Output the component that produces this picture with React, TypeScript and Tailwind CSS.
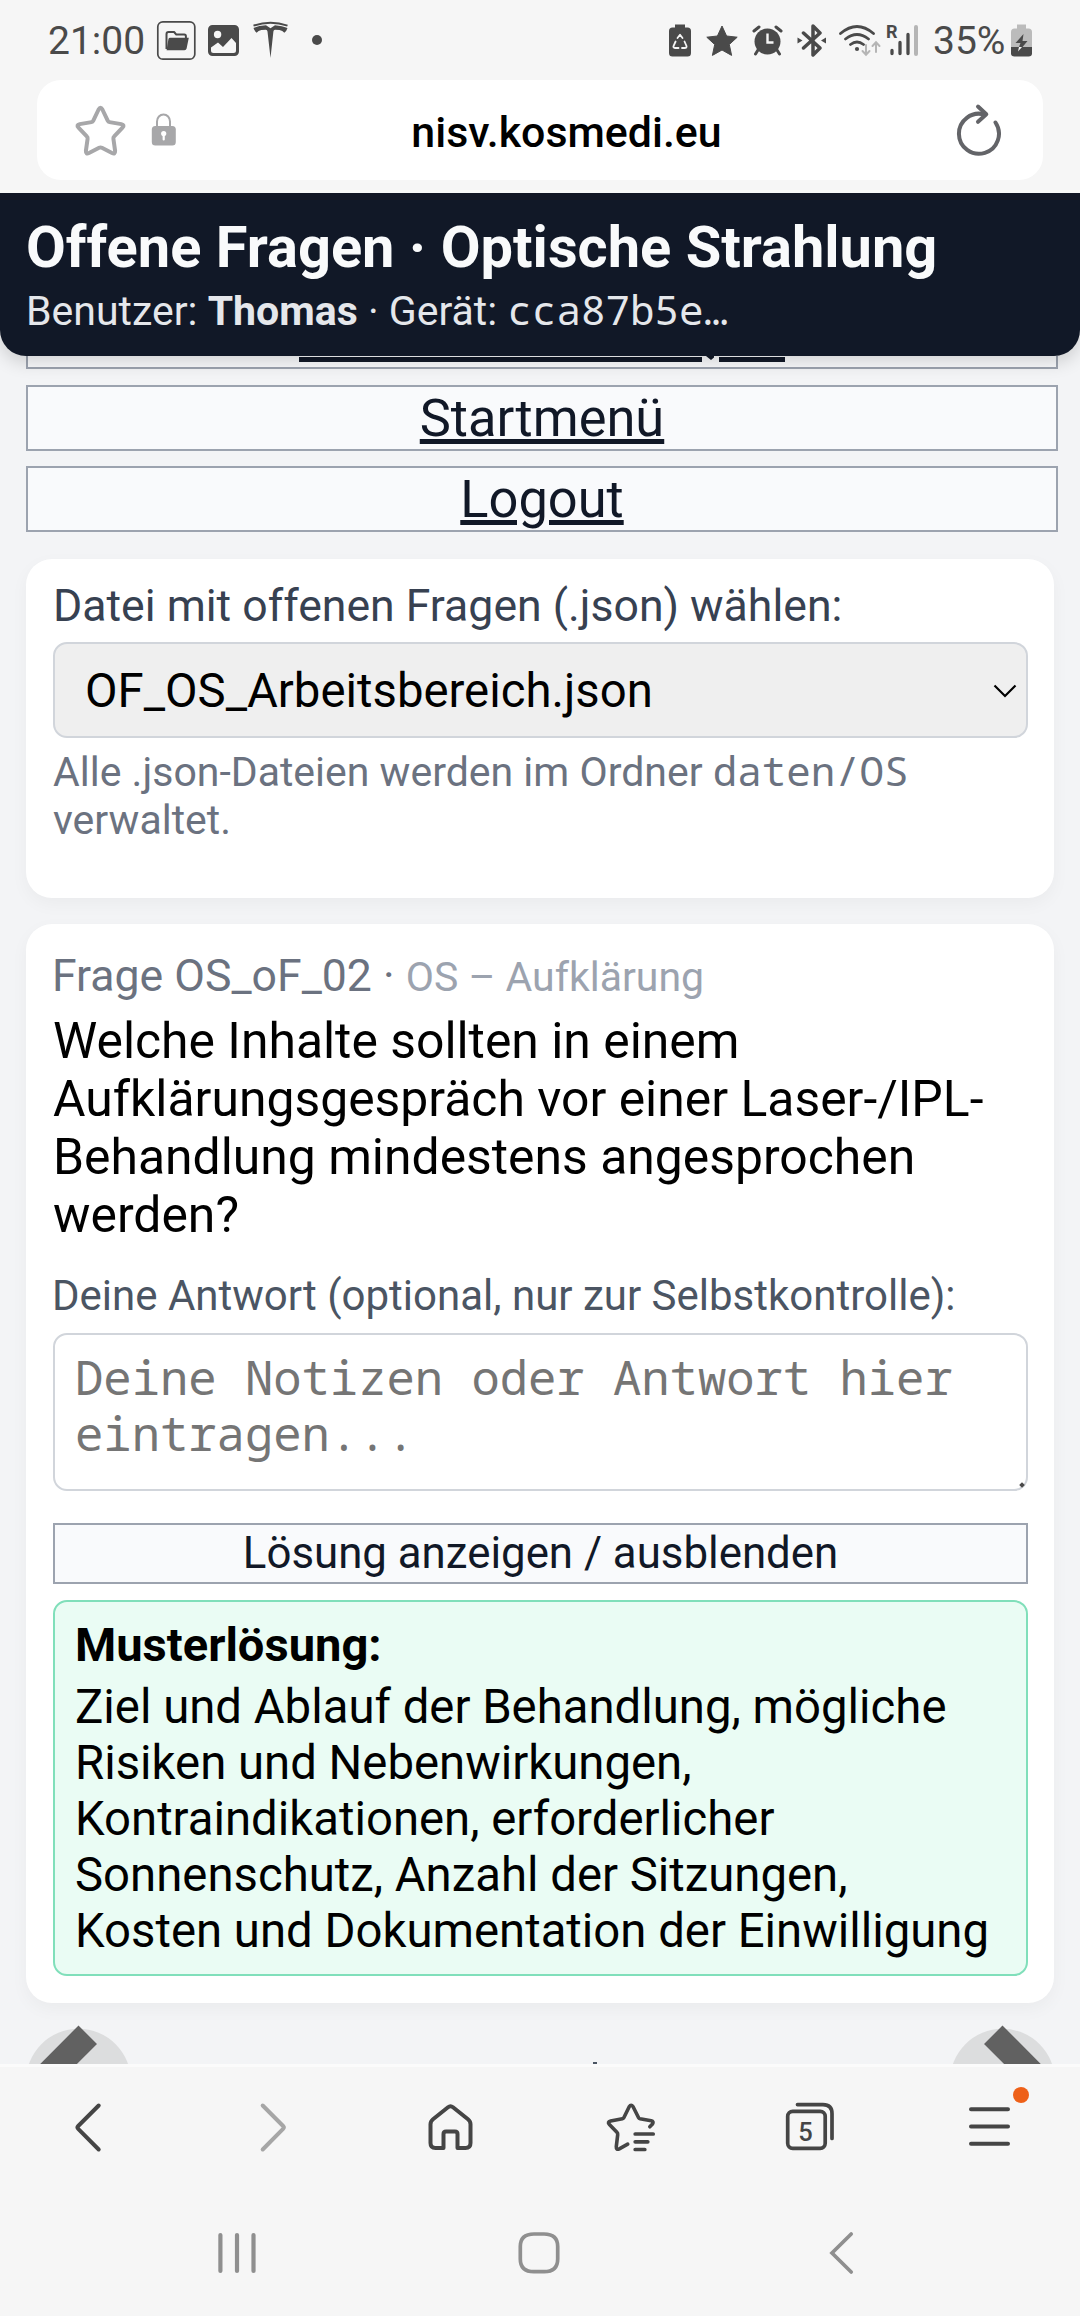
import type { ReactNode } from "react";

type IconProps = {
  box: string;
  w: number;
  h: number;
  className?: string;
  children: ReactNode;
};

function Icon({ box, w, h, className = "", children }: IconProps) {
  return (
    <svg viewBox={box} width={w} height={h} fill="none" className={"block shrink-0 " + className}>
      {children}
    </svg>
  );
}

function StatusBar() {
  return (
    <div className="flex h-[80px] items-start text-[#4a4a4a]">
      <span className="ml-[48px] mt-[17px] w-[108px] text-[39px] leading-[48px]">21:00</span>

      <Icon box="156 20 41 41" w={41} h={41} className="mt-[20px]">
        <rect x="157.8" y="21.8" width="37" height="37.4" rx="5" stroke="currentColor" strokeWidth="1.7" />
        <path d="M166.5 49V34.2q0-2.2 2-2.2h5.6l2.2 2.6h8q1.6 0 1.6 1.8V38" stroke="currentColor" strokeWidth="2" strokeLinejoin="round" />
        <path d="M170.2 37.8h18.6l-2.2 10.6q-.4 1.8-2.2 1.8h-17.8l1.8-11q.3-1.4 1.8-1.4z" fill="currentColor" />
      </Icon>
      <Icon box="208 25 31 31" w={31} h={31} className="ml-[11px] mt-[25px]">
        <path
          fillRule="evenodd"
          fill="currentColor"
          d="M212.5 25h22a4.5 4.5 0 0 1 4.500 4.500v22a4.500 4.500 0 0 1-4.500 4.500h-22a4.500 4.500 0 0 1-4.500-4.500v-22a4.500 4.500 0 0 1 4.500-4.500zM217.600 30.800a3.700 3.700 0 1 0 0 7.400 3.700 3.700 0 0 0 0-7.400zM211 47.500v3q0 2.500 2.500 2.500h20q2.500 0 2.500-2.500v-7.500l-4.500-5-8.500 9-5-4.500z"
        />
      </Icon>
      <Icon box="252 21 37 38" w={37} h={38} className="ml-[13px] mt-[21px]">
        <path d="M253.500 25.600Q270.500 20 287.500 25.600" stroke="currentColor" strokeWidth="2" />
        <path fill="currentColor" d="M253.500 28q5-2.400 12.500-2.800l4.500 3 4.500-3q7.500.4 12.500 2.800-.8 3-3.200 4.800-1.600-2.400-4.800-2.800l-4.500-.2q-1.400.2-1.600 1.800L270.500 58l-3-26.400q-.2-1.600-1.600-1.800l-4.500.2q-3.200.4-4.800 2.800-2.200-1.800-3.100-4.800z" />
      </Icon>
      <span className="ml-[23px] mt-[35px] size-[10px] rounded-full bg-[#4a4a4a]" />

      <Icon box="669 24 22 33" w={22} h={33} className="ml-[347px] mt-[24px]">
        <path fill="currentColor" d="M675 24.500h10v3h2.500q3.500 0 3.500 3.500v22q0 3.500-3.500 3.500h-15q-3.500 0-3.500-3.500v-22q0-3.500 3.500-3.500h2.500z" />
        <path d="M677.500 38l2.500-3.200 2.500 3.200M684.500 41.500l2 4.500q.5 2-2 2h-2.500M678.500 48H675q-2.200-.2-1.400-2.200l2-4.300" stroke="#f6f6f6" strokeWidth="1.800" strokeLinecap="round" strokeLinejoin="round" />
      </Icon>
      <Icon box="706 25 32 32" w={32} h={32} className="ml-[15px] mt-[25px]">
        <path fill="currentColor" stroke="currentColor" strokeLinejoin="round" d="M722 26l4.600 10 10.600 1.200-7.900 7.300 2.300 10.900L722 50l-9.600 5.400 2.300-10.900-7.900-7.300 10.600-1.200z" />
      </Icon>
      <Icon box="752 25 31 31" w={31} h={31} className="ml-[14px] mt-[25px]">
        <circle cx="767.500" cy="41.500" r="13" fill="currentColor" />
        <path d="M754 31l5-4M781 31l-5-4M758 50l-2.500 4M777 50l2.500 4" stroke="currentColor" strokeWidth="3" strokeLinecap="round" />
        <path d="M767.500 33.500v9h6" stroke="#f6f6f6" strokeWidth="2.400" />
      </Icon>
      <Icon box="797 24 30 33" w={30} h={33} className="ml-[14px] mt-[24px]">
        <path d="M803.500 33L820 48l-7 7V26l7 7-16.500 15" stroke="currentColor" strokeWidth="3.500" strokeLinejoin="round" strokeLinecap="round" />
        <path fill="currentColor" d="M797.500 37.500l5 3-5 3zM826 37.500l-5 3 5 3z" />
      </Icon>
      <Icon box="839 24 42 33" w={42} h={33} className="ml-[12px] mt-[24px]">
        <path d="M840.500 33.500q16.500-14 33 0M845.500 39q11.500-9 23 0M850.500 44.500q6.500-5 13 0" stroke="currentColor" strokeWidth="2.800" strokeLinecap="round" />
        <circle cx="857" cy="49" r="2.100" fill="currentColor" />
        <path d="M866 45v9M862.500 51l3.500 3.700 3.500-3.700M876 52v-9M872.500 46l3.500-3.700 3.500 3.700" stroke="#b5b5b5" strokeWidth="2" strokeLinecap="round" />
      </Icon>
      <div className="relative ml-[5px] mt-[24px] h-[33px] w-[33px]">
        <span className="absolute left-0 top-0 text-[18px] font-bold leading-[16px]">R</span>
        <Icon box="886 24 33 33" w={33} h={33}>
          <path d="M892 50.500v3M900 42.500v11M908 34.500v19" stroke="currentColor" strokeWidth="3.300" strokeLinecap="round" />
          <path d="M916 27v27" stroke="#b5b5b5" strokeWidth="4" strokeLinecap="round" />
        </Icon>
      </div>
      <span className="ml-[14px] mt-[17px] w-[78px] text-[39px] leading-[48px]">35%</span>
      <Icon box="1011 24 22 33" w={22} h={33} className="mt-[24px]">
        <path fill="#bbbbbb" d="M1017 24.500h9v4h2.500q3.500 0 3.500 3.500v16h-21V32q0-3.500 3.500-3.500h2.500z" />
        <path fill="currentColor" d="M1011 47h21v6.500q0 3-3.500 3h-14q-3.500 0-3.500-3z" />
        <path fill="currentColor" d="M1023.500 34l-8 9h5l-1.500 4h3.500l5-6h-5z" />
        <path fill="#f6f6f6" d="M1019 47h3l-4 4.500z" />
      </Icon>
    </div>
  );
}

function AddressBar() {
  return (
    <div className="mx-[37px] flex h-[100px] items-center rounded-[24px] bg-white">
      <Icon box="74 104 53 53" w={53} h={53} className="ml-[37px]">
        <path
          d="M98.600 109.500q1.900-3.400 3.800 0l5.300 11.200q.6 1.200 1.800 1.400l11.800 2q3.700.9 1.200 3.600l-8.300 8.700q-1 1-.8 2.300l1.700 12.200q.2 3.700-3.100 2.100l-10.100-5.200q-1.400-.7-2.800 0L89 153q-3.300 1.600-3.100-2.100l1.700-12.200q.2-1.300-.8-2.300l-8.300-8.700q-2.500-2.700 1.200-3.600l11.800-2q1.200-.2 1.800-1.400z"
          stroke="#a7a7a9"
          strokeWidth="4"
          strokeLinejoin="round"
        />
      </Icon>
      <Icon box="151 114 26 34" w={26} h={34} className="ml-[24px]">
        <path d="M157 129v-6.500a6.500 7 0 0 1 13 0v6.500" stroke="#a7a7a9" strokeWidth="2" />
        <rect x="151.800" y="127" width="24" height="19.500" rx="3.500" fill="#a7a7a9" />
        <circle cx="163.700" cy="134.500" r="2.600" fill="white" />
        <path d="M163.700 134.500v6" stroke="white" strokeWidth="2.200" strokeLinecap="round" />
      </Icon>
      <span className="flex-1 pr-[96px] pt-[4px] text-center text-[42.900px] font-medium leading-[50px] text-black pl-[97px]">nisv.kosmedi.eu</span>
      <Icon box="955 101 50 54" w={50} h={54} className="mr-[38px]">
        <path d="M995.500 120.500A20 20 0 1 1 984.500 112.500" stroke="#636468" strokeWidth="4" strokeLinecap="round" />
        <path d="M978 104.500l8.300 7.700-8.300 7.600" stroke="#636468" strokeWidth="4" strokeLinecap="round" strokeLinejoin="round" />
      </Icon>
    </div>
  );
}

function PageHeader() {
  return (
    <header className="relative z-10 h-[163px] rounded-b-[26px] bg-[#111827] pl-[26px] pt-[20px] shadow-[0_6px_18px_rgba(0,0,0,0.16)]">
      <h1 className="whitespace-nowrap text-[57.800px] font-bold leading-[69px] text-[#f9fafb]">Offene Fragen · Optische Strahlung</h1>
      <p className="mt-[5px] whitespace-nowrap text-[41px] leading-[48px] text-[#e5e7eb]">
        Benutzer: <b className="font-bold">Thomas</b> · Gerät: <code className="font-['Noto_Sans_Mono','DejaVu_Sans_Mono',monospace] text-[40.900px] leading-none">cca87b5e…</code>
      </p>
    </header>
  );
}

function LinkBox({ label, className = "" }: { label: string; className?: string }) {
  return (
    <a
      className={
        "flex h-[66px] w-[1032px] items-center justify-center border-2 border-[#9ca3af] bg-[#f9fafc] text-[52.400px] leading-[62px] text-[#111827] underline decoration-[5px] underline-offset-[3px] " +
        className
      }
    >
      {label}
    </a>
  );
}

function RoundArrow({ flip = false }: { flip?: boolean }) {
  return (
    <svg viewBox="26 2022 106 112" width="106" height="112" className={flip ? "-scale-x-100" : ""}>
      <circle cx="78.500" cy="2081.300" r="52.500" fill="#dcddde" />
      <path d="M78.500 2025.500L97 2044 59.600 2081.300 97 2118.600 78.500 2137 23 2081.300z" fill="#616161" />
    </svg>
  );
}

function BottomBar() {
  return (
    <div className="h-[252px] border-t-[3px] border-[#fbfbfb] bg-[#f6f6f6] text-[#454545]">
      <div className="grid h-[122px] grid-cols-6 items-center justify-items-center">
        <Icon box="60 2098 60 60" w={60} h={60}>
          <path d="M98.700 2105.500L78.200 2126q-1.400 1.400 0 2.800L98.700 2149.500" stroke="currentColor" strokeWidth="4" strokeLinecap="round" />
        </Icon>
        <Icon box="240 2098 60 60" w={60} h={60}>
          <path d="M262.700 2105.500L283.100 2126q1.400 1.400 0 2.800L262.700 2149.500" stroke="#a6a6a6" strokeWidth="4" strokeLinecap="round" />
        </Icon>
        <Icon box="420 2098 60 60" w={60} h={60}>
          <path
            d="M448 2107.300q2.500-2 5 0l15 12q2.500 2 2.500 5V2143q0 5-5 5h-8V2134q0-2.500-2.500-2.500h-9q-2.500 0-2.500 2.500v14h-8q-5 0-5-5v-18.700q0-3 2.500-5z"
            stroke="currentColor"
            strokeWidth="4"
            strokeLinejoin="round"
          />
        </Icon>
        <Icon box="600 2098 60 60" w={60} h={60}>
          <path
            d="M649.800 2126.800l2.700-2.800q1.600-2.600-1.300-3.300l-11.200-1.900q-1-.2-1.400-1l-5.500-11q-2-3-3.900 0l-5.400 11q-.4.800-1.400 1l-11.800 2.200q-3.600 1-1.200 3.500l7.500 7.800q1 1 .8 2.400l-1.400 11.800q-.2 3.800 3 2.300l8.400-4.600"
            stroke="currentColor"
            strokeWidth="3.600"
            strokeLinecap="round"
            strokeLinejoin="round"
          />
          <path d="M635.200 2134h18M635.200 2141.800h12.600M635.200 2149.500h9.600" stroke="currentColor" strokeWidth="3.700" strokeLinecap="round" />
        </Icon>
        <div className="relative size-[60px]">
          <Icon box="780 2098 60 60" w={60} h={60}>
            <rect x="787.700" y="2111.300" width="37.500" height="37" rx="5" stroke="currentColor" strokeWidth="3.700" />
            <path d="M797.500 2104.600H823q9 0 9 9V2138.500" stroke="currentColor" strokeWidth="3.700" strokeLinecap="round" />
          </Icon>
          <span className="absolute left-[5px] top-[17px] w-[41px] text-center text-[25.500px] font-medium leading-[34px]">5</span>
        </div>
        <div className="relative size-[60px]">
          <Icon box="960 2098 60 60" w={60} h={60}>
            <path d="M971 2109.300h37M971 2126.500h37M971 2143.700h37" stroke="currentColor" strokeWidth="4" strokeLinecap="round" />
          </Icon>
          <span className="absolute -top-[11px] left-[53px] size-[16px] rounded-full bg-[#ee6018]" />
        </div>
      </div>
      <div className="flex h-[128px] items-center justify-center gap-[258px] pr-[2px] text-[#8f8f8f]">
        <Icon box="215 2231 44 44" w={44} h={44}>
          <path d="M220.400 2235v36M237 2235v36M253.500 2235v36" stroke="currentColor" strokeWidth="4.200" strokeLinecap="round" />
        </Icon>
        <Icon box="517 2231 44 44" w={44} h={44}>
          <path
            d="M534 2234h10q13.700 0 13.700 12.500v12.500q0 12.700-13.700 12.700h-10q-13.700 0-13.700-12.700v-12.500q0-12.500 13.700-12.500z"
            stroke="currentColor"
            strokeWidth="3.700"
          />
        </Icon>
        <Icon box="820 2231 44 44" w={44} h={44}>
          <path d="M852.200 2234L833 2253l19.200 19" stroke="currentColor" strokeWidth="3.700" strokeLinecap="round" />
        </Icon>
      </div>
    </div>
  );
}

export default function App() {
  return (
    <div className="h-[2316px] w-[1080px] overflow-hidden bg-[#f6f6f6] font-[Roboto,sans-serif]">
      <StatusBar />
      <AddressBar />
      <div className="mt-[10px] h-[3px] bg-[#f7fafa]" />

      <main className="h-[1871px] overflow-hidden bg-[#f3f4f6]">
        <PageHeader />

        <nav className="ml-[26px] flex flex-col">
          <div className="flex h-[13px] w-[1032px] border-2 border-t-0 border-[#9ca3af] bg-[#f9fafc]">
            <div className="ml-[271px] mt-px h-[5px] w-[403px] bg-[#111827]" />
            <svg viewBox="0 0 17 6" width="17" height="6">
              <path d="M4 0h8v1.500l-3 2.500z" fill="#111827" />
            </svg>
            <div className="mt-px h-[5px] w-[66px] bg-[#111827]" />
          </div>
          <LinkBox label="Startmenü" className="mt-[16px]" />
          <LinkBox label="Logout" className="mt-[15px]" />
        </nav>

        <section className="mx-[26px] mt-[27px] h-[339px] rounded-[26px] bg-white px-[27px] pr-[26px] pt-[21px] shadow-[0_6px_18px_rgba(0,0,0,0.04)]">
          <label className="block whitespace-nowrap text-[44.600px] leading-[53px] text-[#374151]">Datei mit offenen Fragen (.json) wählen:</label>
          <div className="mt-[9px] flex h-[96px] items-center justify-between rounded-[14px] border-2 border-[#d1d5db] bg-[#efefef] pl-[30px] pr-[9px] pt-px text-[47.300px] leading-[56px] text-black">
            <span>OF_OS_Arbeitsbereich.json</span>
            <svg viewBox="0 0 24 14" width="24" height="14" fill="none">
              <path d="M1.500 1.500L12 12 22.500 1.500" stroke="black" strokeWidth="2.200" />
            </svg>
          </div>
          <p className="mt-[10px] text-[41px] leading-[48px] text-[#6b7280]">
            Alle .json-Dateien werden im Ordner <code className="font-['Noto_Sans_Mono','DejaVu_Sans_Mono',monospace] text-[40.800px] leading-none">daten/OS</code>
            <br />
            verwaltet.
          </p>
        </section>

        <section className="mx-[26px] mt-[26px] h-[1079px] rounded-[26px] bg-white pl-[27px] pr-[26px] pt-[26px] shadow-[0_6px_18px_rgba(0,0,0,0.04)]">
          <p className="-ml-px whitespace-nowrap text-[44.600px] leading-[53px] text-[#6b7280]">
            Frage OS_oF_02 · <span className="text-[41px] leading-none text-[#9ca3af]">OS – Aufklärung</span>
          </p>
          <h2 className="mt-[8.500px] whitespace-nowrap text-[49.850px] font-normal leading-[58px] text-black">
            Welche Inhalte sollten in einem
            <br />
            Aufklärungsgespräch vor einer Laser-/IPL-
            <br />
            Behandlung mindestens angesprochen
            <br />
            werden?
          </h2>
          <label className="-ml-px mt-[27px] block whitespace-nowrap text-[42px] leading-[50px] text-[#4b5563]">Deine Antwort (optional, nur zur Selbstkontrolle):</label>
          <div className="relative mt-[12.500px] h-[158px]">
            <textarea
              className="block h-[158px] w-full resize-none overflow-hidden rounded-[14px] border-2 border-[#d1d5db] bg-white px-[20px] py-[14px] font-['Noto_Sans_Mono','DejaVu_Sans_Mono',monospace] text-[47.200px] leading-[56px] placeholder:text-[#757575]"
              placeholder="Deine Notizen oder Antwort hier eintragen..."
            />
            <span className="absolute bottom-[4px] right-[4px] size-[4px] rotate-45 bg-[#4a4a4a]" />
          </div>
          <button className="mt-[32px] flex h-[61px] w-full items-center justify-center border-2 border-[#9ca3af] bg-[#f9fafc] pb-px text-[43.800px] leading-[52px] text-[#111827]">
            Lösung anzeigen / ausblenden
          </button>
          <div className="mt-[16px] h-[376px] whitespace-nowrap rounded-[14px] border-2 border-[#80dfba] bg-[#eafcf4] pl-[20px] pt-[14.500px] text-[47.300px] leading-[56px] text-black">
            <strong className="block text-[47.100px] font-bold">Musterlösung:</strong>
            <p className="mt-[6px]">
              Ziel und Ablauf der Behandlung, mögliche
              <br />
              Risiken und Nebenwirkungen,
              <br />
              Kontraindikationen, erforderlicher
              <br />
              Sonnenschutz, Anzahl der Sitzungen,
              <br />
              Kosten und Dokumentation der Einwilligung
            </p>
          </div>
        </section>

        <div className="mt-[19px] flex h-[42px] items-start justify-between overflow-hidden pl-[26px] pr-[25px]">
          <RoundArrow />
          <div className="ml-[108px] mt-[40px] h-[2px] w-[4px] shrink-0 bg-[#4b5563]" />
          <RoundArrow flip />
        </div>
      </main>

      <BottomBar />
    </div>
  );
}
